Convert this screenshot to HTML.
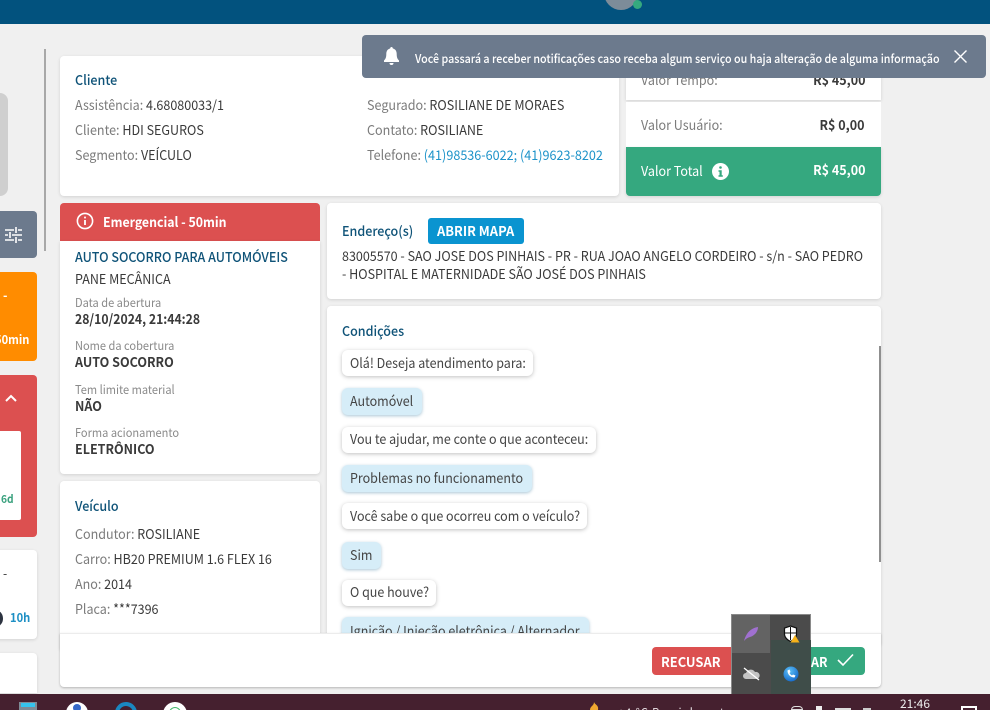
<!DOCTYPE html>
<html lang="pt-BR"><head><meta charset="utf-8"><title>Serviço</title>
<style>
*{box-sizing:border-box}
html,body{margin:0;padding:0;width:990px;height:710px;overflow:hidden;background:#f0f0f0}
body{position:relative;font-family:"Noto Sans CJK JP","Liberation Sans",sans-serif;font-size:13.5px;color:#3a3a3a}
.a{position:absolute}
.t{position:absolute;white-space:nowrap;line-height:20px;height:20px;transform:scaleX(.928);transform-origin:left center}
.r{transform-origin:right center}
.card{position:absolute;background:#fff;border-radius:4px;box-shadow:0 1px 3px rgba(0,0,0,.13)}
.g{color:#7b7b7b}
.h{color:#0f5378;font-weight:500}
.b{font-weight:700}
.s{font-size:12px;color:#8a8a8a;transform:scaleX(.92)}
.sc{display:inline-block;transform:scaleX(.925);transform-origin:left center;white-space:nowrap}
.bub{position:absolute;left:342px;height:26px;line-height:25px;padding:0 8px;border-radius:6px;background:#fff;box-shadow:0 1px 4px rgba(0,0,0,.25);white-space:nowrap;color:#444}
.bub.u{height:27px;background:#d6edf8;box-shadow:0 1px 3px rgba(40,110,150,.4)}
</style></head><body>
<div class="a" style="left:0;top:0;width:990px;height:24px;background:#02527e"></div>
<div class="a" style="left:604px;top:-24px;width:34px;height:34px;border-radius:50%;background:#7d8c99"></div>
<div class="a" style="left:633px;top:0;width:9px;height:9px;border-radius:50%;background:#35a97f"></div>

<div class="a" style="left:44px;top:49px;width:2px;height:202px;background:#a8a8a8"></div>

<!-- left rail -->
<div class="a" style="left:-20px;top:93px;width:28px;height:103px;border-radius:8px;background:#cfcfcf"></div>
<div class="a" style="left:-10px;top:211px;width:47px;height:47px;border-radius:4px;background:#6c7a8d"></div>
<svg class="a" style="left:5px;top:226px" width="17" height="17" viewBox="0 0 17 17" fill="none" stroke="#fff" stroke-width="1.6"><path d="M0 4h9M13 4h4M11 1v6M0 9h3M7 9h10M5 6v6M0 14h9M13 14h4M11 11v6"/></svg>
<div class="a" style="left:-10px;top:272px;width:47px;height:89px;border-radius:4px;background:#ff8c00"></div>
<div class="t" style="left:3px;top:285px;color:#fff;font-size:13px;font-weight:700">-</div>
<div class="t" style="left:-5px;top:330px;color:#fff;font-size:12px;font-weight:700">50min</div>
<div class="a" style="left:-10px;top:375px;width:47px;height:162px;border-radius:4px;background:#dc5050"></div>
<svg class="a" style="left:5px;top:394px" width="12" height="8" viewBox="0 0 12 8" fill="none" stroke="#fff" stroke-width="2"><path d="M1 7l5-5 5 5"/></svg>
<div class="a" style="left:-10px;top:431px;width:31px;height:89px;border-radius:2px;background:#fff"></div>
<div class="t" style="left:1px;top:489px;color:#3aa17e;font-size:11px;font-weight:700">6d</div>
<div class="a" style="left:-10px;top:550px;width:47px;height:89px;border-radius:4px;background:#fff;box-shadow:0 1px 3px rgba(0,0,0,.12)"></div>
<div class="t" style="left:3px;top:563px;font-size:13px">-</div>
<div class="a" style="left:-8px;top:611px;width:11px;height:15px;border-radius:50%;background:#2c3340"></div>
<div class="t" style="left:10px;top:608px;color:#1d8fc4;font-size:12px;font-weight:700">10h</div>
<div class="a" style="left:-10px;top:653px;width:47px;height:40px;border-radius:4px 4px 0 0;background:#fff;box-shadow:0 1px 3px rgba(0,0,0,.12)"></div>

<!-- cliente -->
<div class="card" style="left:60px;top:56px;width:559px;height:140px"></div>
<div class="t h" style="left:75px;top:69px">Cliente</div>
<div class="t" style="left:75px;top:94px"><span class="g">Assistência:</span> 4.68080033/1</div>
<div class="t" style="left:75px;top:119px"><span class="g">Cliente:</span> HDI SEGUROS</div>
<div class="t" style="left:75px;top:144px"><span class="g">Segmento:</span> VEÍCULO</div>
<div class="t" style="left:367px;top:94px;transform:scaleX(.932)"><span class="g">Segurado:</span> ROSILIANE DE MORAES</div>
<div class="t" style="left:367px;top:119px;transform:scaleX(.932)"><span class="g">Contato:</span> ROSILIANE</div>
<div class="t" style="left:367px;top:144px;transform:scaleX(.934)"><span class="g">Telefone:</span> <span style="color:#1e93c9">(41)98536-6022; (41)9623-8202</span></div>

<!-- valores -->
<div class="card" style="left:626px;top:56px;width:255px;height:44px;border-radius:0 4px 0 0"></div>
<div class="t g" style="left:641px;top:69px">Valor Tempo:</div>
<div class="t b r" style="right:125px;top:69px">R$ 45,00</div>
<div class="a" style="left:626px;top:102px;width:255px;height:45px;background:#fff"></div>
<div class="t g" style="left:641px;top:114px">Valor Usuário:</div>
<div class="t b r" style="right:125px;top:114px">R$ 0,00</div>
<div class="a" style="left:626px;top:147px;width:255px;height:49px;background:#35a87f;border-radius:0 0 4px 4px;box-shadow:0 1px 3px rgba(0,0,0,.13)"></div>
<div class="t" style="left:641px;top:160px;color:#fff">Valor Total</div>
<svg class="a" style="left:712px;top:163px" width="17" height="17" viewBox="0 0 17 17"><circle cx="8.500" cy="8.500" r="8.500" fill="#fff"/><rect x="7.200" y="3.200" width="2.600" height="2.600" rx="1.200" fill="#35a87f"/><path d="M6.500 7.200h3.200v5h1.100v1.500H6.500v-1.500h1v-3.500h-1z" fill="#35a87f"/></svg>
<div class="t b r" style="right:125px;top:159px;color:#fff">R$ 45,00</div>

<!-- emergencial -->
<div class="a" style="left:60px;top:203px;width:260px;height:38px;background:#dc5050;border-radius:4px 4px 0 0"></div>
<svg class="a" style="left:76px;top:212px" width="18" height="18" viewBox="0 0 18 18" fill="none" stroke="#fff" stroke-width="1.6"><circle cx="9" cy="9" r="7.600"/><path d="M9 8v5M9 4.600v1.800" stroke-width="1.800"/></svg>
<div class="t b" style="left:103px;top:211px;color:#fff;transform:scaleX(.912)">Emergencial - 50min</div>
<div class="card" style="left:60px;top:241px;width:260px;height:233px;border-radius:0 0 4px 4px"></div>
<div class="t h" style="left:75px;top:246px">AUTO SOCORRO PARA AUTOMÓVEIS</div>
<div class="t" style="left:75px;top:268px">PANE MECÂNICA</div>
<div class="t s" style="left:75px;top:293px">Data de abertura</div>
<div class="t b" style="left:75px;top:308px;transform:scaleX(.905)">28/10/2024, 21:44:28</div>
<div class="t s" style="left:75px;top:336px">Nome da cobertura</div>
<div class="t b" style="left:75px;top:351px">AUTO SOCORRO</div>
<div class="t s" style="left:75px;top:380px">Tem limite material</div>
<div class="t b" style="left:75px;top:395px">NÃO</div>
<div class="t s" style="left:75px;top:423px">Forma acionamento</div>
<div class="t b" style="left:75px;top:438px">ELETRÔNICO</div>

<!-- veiculo -->
<div class="card" style="left:60px;top:481px;width:260px;height:170px"></div>
<div class="t h" style="left:75px;top:495px">Veículo</div>
<div class="t" style="left:75px;top:523px"><span class="g">Condutor:</span> ROSILIANE</div>
<div class="t" style="left:75px;top:548px"><span class="g">Carro:</span> HB20 PREMIUM 1.6 FLEX 16</div>
<div class="t" style="left:75px;top:573px"><span class="g">Ano:</span> 2014</div>
<div class="t" style="left:75px;top:598px"><span class="g">Placa:</span> ***7396</div>

<!-- endereco -->
<div class="card" style="left:327px;top:203px;width:554px;height:96px"></div>
<div class="t h" style="left:342px;top:220px">Endereço(s)</div>
<div class="a" style="left:428px;top:218px;width:96px;height:26px;border-radius:3px;background:#0a94d0;color:#fff;font-weight:700;line-height:25px;padding-left:9px"><span class="sc" style="transform:scaleX(.955)">ABRIR MAPA</span></div>
<div class="t" style="left:342px;top:245px">83005570 - SAO JOSE DOS PINHAIS - PR - RUA JOAO ANGELO CORDEIRO - s/n - SAO PEDRO</div>
<div class="t" style="left:342px;top:263px">- HOSPITAL E MATERNIDADE SÃO JOSÉ DOS PINHAIS</div>

<!-- condicoes -->
<div class="card" style="left:327px;top:306px;width:554px;height:340px"></div>
<div class="t h" style="left:342px;top:320px">Condições</div>
<div class="bub" style="top:350px;width:191px"><span class="sc">Olá! Deseja atendimento para:</span></div>
<div class="bub u" style="top:388px;width:80px"><span class="sc">Automóvel</span></div>
<div class="bub" style="top:427px;width:254px;line-height:23px"><span class="sc">Vou te ajudar, me conte o que aconteceu:</span></div>
<div class="bub u" style="top:465px;width:190px"><span class="sc">Problemas no funcionamento</span></div>
<div class="bub" style="top:503px;width:245px"><span class="sc">Você sabe o que ocorreu com o veículo?</span></div>
<div class="bub u" style="top:542px;width:39px"><span class="sc">Sim</span></div>
<div class="bub" style="top:580px;width:94px;line-height:23px"><span class="sc">O que houve?</span></div>
<div class="bub u" style="top:617px;width:247px;line-height:27px"><span class="sc">Ignição / Injeção eletrônica / Alternador</span></div>
<div class="a" style="left:879px;top:346px;width:2px;height:216px;background:#8f8f8f"></div>

<!-- footer -->
<div class="a" style="left:60px;top:633px;width:821px;height:54px;background:#fff;border-top:1px solid #ececec;border-radius:0 0 4px 4px;box-shadow:0 1px 2px rgba(0,0,0,.25)"></div>
<div class="a" style="left:652px;top:647px;width:90px;height:28px;border-radius:4px;background:#dc5050;color:#fff;font-weight:700;line-height:28px;padding-left:9px"><span class="sc" style="transform:scaleX(.955)">RECUSAR</span></div>
<div class="a" style="left:780px;top:647px;width:85px;height:28px;border-radius:4px;background:#35a87f;color:#fff;font-weight:700;line-height:28px;padding-left:31px"><span class="sc">AR</span></div>
<svg class="a" style="left:837px;top:653px" width="17" height="14" viewBox="0 0 17 14" fill="none" stroke="#fff" stroke-width="1.6"><path d="M1 7l5 5L16 1.500"/></svg>

<!-- notification -->
<div class="a" style="left:362px;top:35px;width:624px;height:43px;border-radius:4px;background:#6c7a8d"></div>
<svg class="a" style="left:384px;top:47px" width="15" height="18" viewBox="0 0 15 18" fill="#fff"><path d="M7.500 0a1.300 1.300 0 0 1 1.300 1.500C11.500 2 12.700 4.300 12.700 7c0 3.500.8 5 2.300 6.500V15H0v-1.500C1.500 12 2.300 10.500 2.300 7c0-2.700 1.200-5 3.900-5.500A1.300 1.300 0 0 1 7.500 0zM5.500 16h4a2 2 0 0 1-4 0z"/></svg>
<div class="t" style="left:415px;top:49px;color:#fff;font-size:12px;font-weight:500;transform:scaleX(.894)">Você passará a receber notificações caso receba algum serviço ou haja alteração de alguma informação</div>
<svg class="a" style="left:954px;top:50px" width="13" height="13" viewBox="0 0 13 13" fill="none" stroke="#fff" stroke-width="1.400"><path d="M.5.500l12 12M12.500.500l-12 12"/></svg>

<!-- taskbar -->
<div class="a" style="left:0;top:694px;width:990px;height:16px;background:#45202f"></div>
<div class="a" style="left:19px;top:702px;width:18px;height:8px;background:#7e8b96"></div>
<div class="a" style="left:21px;top:703px;width:14px;height:4px;background:#35c4ee"></div>
<div class="a" style="left:66px;top:702px;width:22px;height:22px;border-radius:50%;background:#fff"></div>
<div class="a" style="left:73px;top:704px;width:8px;height:8px;border-radius:50%;background:#3568c8"></div>
<div class="a" style="left:115px;top:702px;width:22px;height:22px;border-radius:50%;border:4px solid #1a87c0"></div>
<div class="a" style="left:163px;top:702px;width:24px;height:24px;border-radius:50%;background:#fff"></div>
<div class="a" style="left:169px;top:707px;width:12px;height:12px;border-radius:50%;border:1.500px solid #45b86c"></div>
<svg class="a" style="left:588px;top:702px" width="12" height="8" viewBox="0 0 12 8"><path d="M6 0C7 3 11 3 10 8H2C2 4 6 4 6 0z" fill="#f0a830"/></svg>
<div class="t" style="left:618px;top:703px;color:#e8e0e4;font-size:12px;letter-spacing:1px">+4 °C  Parcialmente</div>
<div class="a" style="left:791px;top:706px;width:12px;height:4px;border:1px solid #ddd;border-radius:6px 6px 0 0"></div>
<div class="a" style="left:816px;top:706px;width:6px;height:4px;background:#eee"></div>
<div class="a" style="left:835px;top:708px;width:16px;height:2px;background:#ddd"></div>
<div class="a" style="left:863px;top:708px;width:8px;height:2px;background:#ccc"></div>
<div class="t" style="left:900px;top:694px;color:#eee;font-size:12px;line-height:20px;height:16px;transform:none">21:46</div>
<div class="a" style="left:961px;top:706px;width:16px;height:4px;border:2px solid #fff;border-bottom:0"></div>

<!-- tray popup -->
<div class="a" style="left:731px;top:614px;width:80px;height:80px;background:#4b4b4b;border:1px solid #8a8a8a;border-bottom:0"></div>
<div class="a" style="left:732px;top:615px;width:38px;height:38px;background:#636363"></div>
<div class="a" style="left:771px;top:640px;width:40px;height:54px;background:#3f4d49"></div>
<svg class="a" style="left:743px;top:626px" width="16" height="16" viewBox="0 0 16 16"><path d="M1 15C3 7 8 2 15 1c0 5-4 9-8 10-2 .5-4 1.500-6 4z" fill="#a070d0"/></svg>
<svg class="a" style="left:783px;top:625px" width="17" height="18" viewBox="0 0 17 18"><path d="M7.500 1l6 2v6c0 4-3 6-6 7.500C4.500 15 1.500 13 1.500 9V3z" fill="#fff" stroke="#111" stroke-width="1.200"/><path d="M7.500 2v13M2 8h11" stroke="#111"/><path d="M12 10l4.500 7.500h-9z" fill="#f5b21a"/></svg>
<svg class="a" style="left:743px;top:667px" width="17" height="14" viewBox="0 0 17 14"><path d="M3 12a3 3 0 0 1 0-6 5 5 0 0 1 9-1 3.500 3.500 0 0 1 2 7z" fill="#c4c4c4"/><path d="M1 1l15 12" stroke="#fff" stroke-width="1.300"/></svg>
<svg class="a" style="left:783px;top:666px" width="16" height="16" viewBox="0 0 16 16"><defs><radialGradient id="pg" cx=".4" cy=".3" r=".8"><stop offset="0" stop-color="#5cc0f5"/><stop offset="1" stop-color="#0f62c8"/></radialGradient></defs><circle cx="8" cy="8" r="7.500" fill="url(#pg)"/><path d="M4.500 4.500c0 4 3 7 7 7l1-2-2.500-1-1 1c-1-.5-2-1.500-2.500-2.500l1-1-1-2.500z" fill="#fff"/></svg>
</body></html>
